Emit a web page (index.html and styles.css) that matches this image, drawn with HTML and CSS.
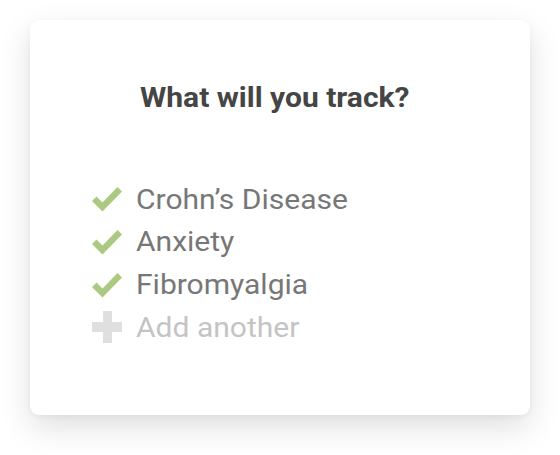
FILE: index.html
```html
<!DOCTYPE html>
<html>
<head>
<meta charset="utf-8">
<link rel="stylesheet" href="styles.css">
</head>
<body>
<div class="card">
  <h1 class="title"><span class="wide">What will you track?</span></h1>
  <ul class="list">
    <li class="item">
      <svg class="icon" viewBox="0 0 30 26"><path d="M0 15 L4.5 10.5 L10.5 16.5 L25.5 1 L30 5.5 L10.5 25.5 Z" fill="#abc981"/></svg>
      <span class="wide">Crohn’s Disease</span>
    </li>
    <li class="item">
      <svg class="icon" viewBox="0 0 30 26"><path d="M0 15 L4.5 10.5 L10.5 16.5 L25.5 1 L30 5.5 L10.5 25.5 Z" fill="#abc981"/></svg>
      <span class="wide">Anxiety</span>
    </li>
    <li class="item">
      <svg class="icon" viewBox="0 0 30 26"><path d="M0 15 L4.5 10.5 L10.5 16.5 L25.5 1 L30 5.5 L10.5 25.5 Z" fill="#abc981"/></svg>
      <span class="wide">Fibromyalgia</span>
    </li>
    <li class="item add">
      <svg class="icon plus" viewBox="0 0 30 32"><path d="M11 0 H20 V11 H30 V21 H20 V32 H11 V21 H0 V11 H11 Z" fill="#dfdfdf"/></svg>
      <span class="wide">Add another</span>
    </li>
  </ul>
</div>
</body>
</html>
```
FILE: styles.css
```css
html, body {
  margin: 0;
  padding: 0;
  background: #ffffff;
}
body {
  width: 560px;
  height: 455px;
  overflow: hidden;
  font-family: Roboto, "Liberation Sans", sans-serif;
}
.card {
  margin: 20px 0 0 30px;
  width: 500px;
  height: 395px;
  box-sizing: border-box;
  background: #fff;
  border-radius: 9px;
  box-shadow: 0 12px 32px rgba(0, 0, 0, 0.13), 0 2px 6px rgba(0, 0, 0, 0.04);
  padding: 62px 62px 0 62px;
}
.title {
  margin: 0 0 0 48px;
  font-size: 28px;
  font-weight: 700;
  color: #454545;
  line-height: 32px;
}
.wide {
  display: inline-block;
  transform: scaleX(1.072);
  transform-origin: left center;
  white-space: nowrap;
}
.list {
  list-style: none;
  margin: 64px 0 0 0;
  padding: 0;
}
.item {
  display: flex;
  align-items: center;
  height: 42.67px;
  font-size: 28px;
  color: #777;
}
.item .icon {
  width: 30px;
  height: 26px;
  margin-right: 14px;
  flex: none;
}
.item .icon.plus {
  height: 32px;
}
.item.add {
  color: #c4c4c4;
}
```
